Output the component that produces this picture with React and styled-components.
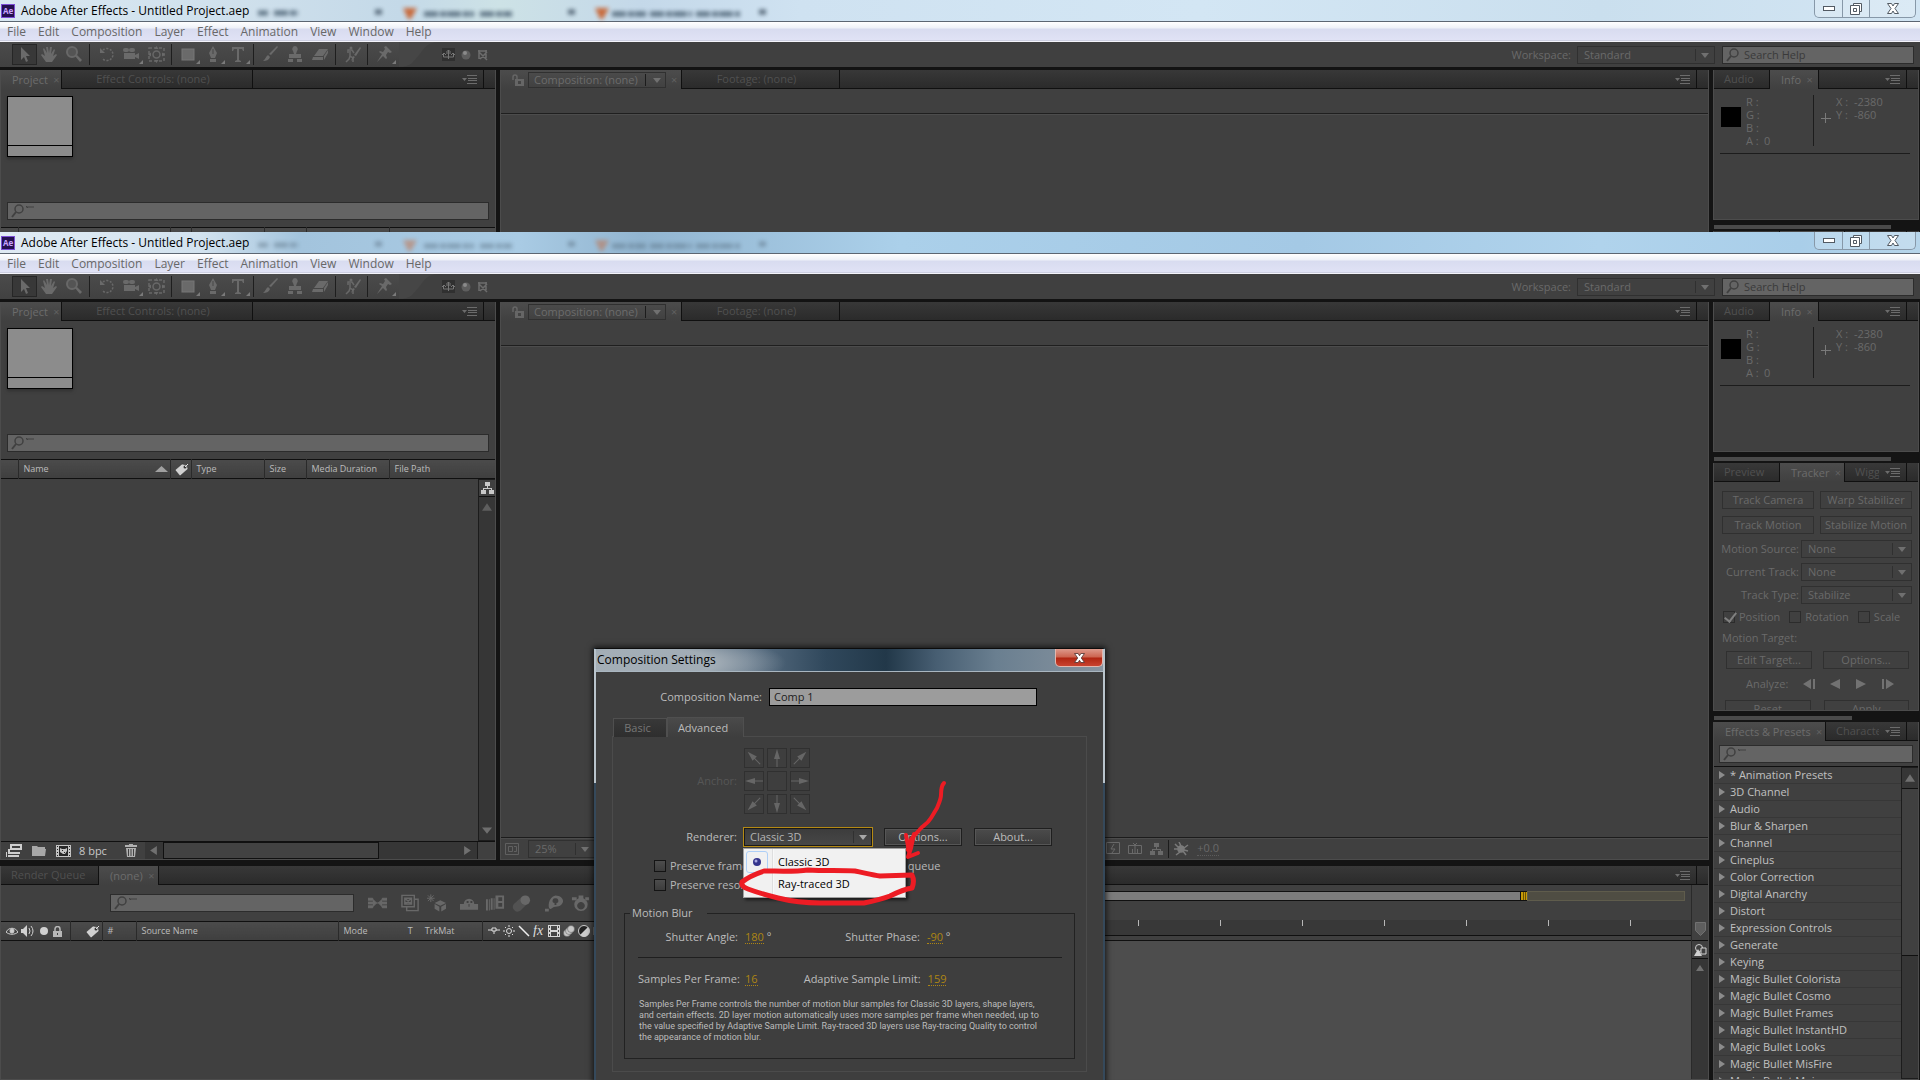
import React, { useId } from 'react';
import styled, { createGlobalStyle, css } from 'styled-components';

const GlobalStyle = createGlobalStyle`
  * {
    box-sizing: border-box;
  }
  body {
    margin: 0;
    background: #141414;
    font-family: 'Open Sans', 'Noto Sans', sans-serif;
    font-size: 11px;
    line-height: 14px;
    color: #bcbcbc;
  }
  button,
  input,
  select {
    font: inherit;
    color: inherit;
    margin: 0;
    padding: 0;
    border: 0;
    background: none;
    border-radius: 0;
  }
  svg {
    display: block;
    flex: none;
  }
`;

const menus = ['File', 'Edit', 'Composition', 'Layer', 'Effect', 'Animation', 'View', 'Window', 'Help'];

const effects = [
  '* Animation Presets',
  '3D Channel',
  'Audio',
  'Blur & Sharpen',
  'Channel',
  'Cineplus',
  'Color Correction',
  'Digital Anarchy',
  'Distort',
  'Expression Controls',
  'Generate',
  'Keying',
  'Magic Bullet Colorista',
  'Magic Bullet Cosmo',
  'Magic Bullet Frames',
  'Magic Bullet InstantHD',
  'Magic Bullet Looks',
  'Magic Bullet MisFire',
  'Magic Bullet Mojo',
];

/* ---------- icons ---------- */

const toolIcons = {
  select: <path d="M5 1v13l3-3 2 5 2-1-2-5h4z" />,
  hand: <path d="M5 16 0 9l1-1 3 2L2 3l1-1 3 5-1-6h2l1 6 1-6h2l-1 7 3-5 1 1-2 6 3-2 1 1-5 7z" />,
  zoom: (
    <>
      <circle cx="6" cy="6" r="5" fill="#545454" stroke="#686868" strokeWidth="2" />
      <path d="m9 10 2-1 5 5-2 2z" />
    </>
  ),
  rotate: (
    <>
      <path d="M5 4a6 6 0 1 1-1 8" fill="none" stroke="#686868" strokeWidth="1.5" strokeDasharray="2 1.5" />
      <path d="M2 2v5h5z" />
    </>
  ),
  camera: (
    <>
      <rect x="0" y="2" width="6" height="4" rx="2" />
      <rect x="6" y="2" width="6" height="4" rx="2" />
      <rect x="1" y="7" width="11" height="6" />
      <path d="m12 9 4-2v6l-4-2z" />
    </>
  ),
  orbit: (
    <>
      <rect x="1" y="2" width="15" height="13" fill="none" stroke="#686868" strokeDasharray="3 2" strokeWidth="1.5" />
      <circle cx="8.5" cy="8.5" r="3.5" fill="none" stroke="#686868" strokeWidth="1.5" />
      <path d="m8.500 0 2 3h-4zM8.500 17l2-3h-4zM0 8.500l3-2v4zM17 8.500l-3-2v4z" />
    </>
  ),
  rect: <rect x="2" y="3" width="12" height="11" stroke="#777" />,
  pen: <path d="M8 0 4 7l2 5h4l2-5zM7.500 3h1v5h-1zM5 13h6v3H5z" fillRule="evenodd" />,
  type: <path d="M2 1h12v4h-1l-1-2H9v11l2 1v1H5v-1l2-1V3H4L3 5H2z" />,
  brush: <path d="M15 0 16 1 9 9 7 8zM6 9l2 2c-1 3-4 4-7 4 2-1 3-5 5-6z" />,
  stamp: <path d="M8 0a3 3 0 0 1 2 5l-1 3h5v4H2V8h5L6 5a3 3 0 0 1 2-5zM1 13h5v3H1zM10 13h5v3h-5z" />,
  eraser: <path d="M7 3h9l-5 7H2zM1 11h10v3H0zM12 10l4-6v3l-4 7z" />,
  roto: (
    <>
      <path d="M4 7V4h4l2 3M6 5v5l3 2v4M6 10l-1 3-3 3" fill="none" stroke="#686868" strokeWidth="1.500" />
      <circle cx="7" cy="2" r="1.500" />
      <path d="m16 1 1 1-5 8-2-1zM9 10l2 1-4 4z" />
    </>
  ),
  pin: <path d="m10 0 6 6-2 1-2-1-2 3 1 3-1 1-3-3-6 6 5-8-3-2 1-1 3 1 2-3-1-2z" />,
};

const ToolIcon = ({ name }) => (
  <svg width="17" height="17" viewBox="0 0 17 17" fill="#6a6a6a">
    {toolIcons[name]}
  </svg>
);

const Triangle = ({ dir = 'down', size = 8, color = '#707070' }) => {
  const paths = {
    down: 'M0 2h8L4 7z',
    up: 'M0 7h8L4 1z',
    left: 'M7 0v8L1 4z',
    right: 'M1 0v8l6-4z',
  };
  return (
    <svg width={size} height={size} viewBox="0 0 8 8" fill={color}>
      <path d={paths[dir]} />
    </svg>
  );
};

const MagnifierIcon = ({ mark }) => (
  <svg width="26" height="14" viewBox="0 0 26 14" fill="none" stroke="#404040">
    <circle cx="8" cy="5" r="4" strokeWidth="1.500" />
    <path d="m5 8-4 5" strokeWidth="2" />
    {mark && <path d="M15 3h8M17 4l-2-2" />}
  </svg>
);

const MenuLinesIcon = () => (
  <svg width="15" height="9" viewBox="0 0 15 9" fill="#6c6c6c">
    <path d="M0 3h5L2.500 6zM5 0h10v1H5zM6 3h9v1H6zM6 5h9v1H6zM5 8h10v1H5z" />
  </svg>
);

const LockIcon = () => (
  <svg width="12" height="12" viewBox="0 0 12 12">
    <path d="M1 6V3a2 2 0 0 1 4 0v2" fill="none" stroke="#666" strokeWidth="1.500" />
    <path d="M3 5h9v7H3zM6 7v3h3V7z" fill="#666" fillRule="evenodd" />
  </svg>
);

const TagIcon = () => (
  <svg width="15" height="13" viewBox="0 0 15 13">
    <path d="M1 7 8 1l5 1 1 4-8 7z" fill="#d0d0d0" stroke="#222" strokeWidth=".5" />
    <circle cx="11" cy="4" r="1.500" fill="#333" />
    <path d="m11 4 3-3" stroke="#ddd" />
  </svg>
);

const FlowchartIcon = ({ color = '#c8c8c8' }) => (
  <svg width="13" height="12" viewBox="0 0 13 12" fill={color}>
    <path d="M4 0h5v4H7v2h4v2h2v4H8V8h2V7H3v1h2v4H0V8h2V6h4V4H4z" />
  </svg>
);

const CompIcon = () => (
  <svg width="15" height="12" viewBox="0 0 15 12">
    <rect width="15" height="12" fill="#c4c4c4" />
    <path d="M3 1h9v10H3zM1 1h1v1H1zM1 4h1v1H1zM1 7h1v1H1zM1 10h1v1H1zM13 1h1v1h-1zM13 4h1v1h-1zM13 7h1v1h-1zM13 10h1v1h-1z" fill="#262626" />
    <path d="m4 3 2 1h3l2-1v3L9 9H7L4 7z" fill="#c4c4c4" />
    <path d="M6 5h1v1H6zM8 7h1v1H8z" fill="#262626" />
  </svg>
);

const timelineIcons = [
  [<path key="flow" d="M0 4h5v2H0zM0 8h5v2H0zM0 12h5v2H0zM15 4h5v2h-5zM15 8h5v2h-5zM15 12h5v2h-5zM5 5l4 4-4 4M15 5l-4 4 4 4M8 9h4" stroke="#686868" />],
  [
    <path key="draft" d="M1 1h13v12H1zM4 4h7v6H4zM4 4l7 6M11 4l-7 6M14 5h4v12H6v-4" fill="none" stroke="#686868" strokeWidth="1.500" />,
    <g key="cube">
      <path d="M0 4h8M4 0v8M1 1l6 6M7 1 1 7" stroke="#686868" />
      <path d="M8 9l6-3 6 3-6 3zM8 10l5 3v5l-5-3zM20 10l-5 3v5l5-3z" />
    </g>,
  ],
  [
    <path key="shy" d="M0 10h4a5 5 0 1 1 11 0h4v6H0zM7 7h2v2H7zM11 7h2v2h-2zM9 10h1v3H9z" fillRule="evenodd" />,
    <path key="blend" d="M0 5h2v12H0zM3 5h1v12H3zM5 4h2v12H5zM8 4h1v12H8zM10 1h9v14h-9zM13 3v4h4V3zM13 9v4h4V9z" fillRule="evenodd" />,
    <g key="blur">
      <path d="M2 10 11 2l7 6-9 9a5 5 0 0 1-7-7z" fill="#525252" />
      <circle cx="14" cy="6" r="5" />
    </g>,
  ],
  [
    <path key="brain" d="M11 1c5 0 8 3 8 6s-3 6-8 6c-3 0-4 3-6 2S3 3 11 1zM11 4a2.500 2.500 0 0 0-1 5v2h2V9a2.500 2.500 0 0 0-1-5zM0 15h4v3H0z" fillRule="evenodd" />,
    <path key="auto" d="M8 1h5v3a7 7 0 1 1-5 0zM10 8a4 4 0 1 0 1 0zM1 3h5v3H1zM15 3h4v3h-4z" fillRule="evenodd" />,
  ],
];

const switchIcons = [
  <path key="shy" d="M0 5h4M8 5h4M4 3h4v3H4zM6 6v3" fill="none" stroke="#ddd" />,
  <g key="sun" fill="none" stroke="#ddd">
    <circle cx="6" cy="6" r="2.500" />
    <path d="M6 0v2M6 10v2M0 6h2M10 6h2M2 2l1 1M9 9l1 1M10 2 9 3M3 9l-1 1" />
  </g>,
  <path key="quality" d="m1 1 10 10" stroke="#eee" strokeWidth="1.500" />,
  <text key="fx" x="0" y="10" fontFamily="Liberation Serif, serif" fontStyle="italic" fontSize="14" fill="#ddd">fx</text>,
  <path key="film" d="M0 0h12v12H0zM3 1v4h6V1zM3 7v4h6V7zM1 1v2h1V1zM1 5v2h1V5zM1 9v2h1V9zM10 1v2h1V1zM10 5v2h1V5zM10 9v2h1V9z" fillRule="evenodd" fill="#d6d6d6" />,
  <g key="blur" fill="#c8c8c8" stroke="#555" strokeWidth=".5">
    <circle cx="4" cy="8" r="3.500" />
    <circle cx="6" cy="6" r="3.500" />
    <circle cx="8" cy="4" r="3.500" />
  </g>,
  <g key="adjust">
    <circle cx="6" cy="6" r="5.500" fill="#222" stroke="#ccc" />
    <path d="M10 2A5.500 5.500 0 0 1 2 10z" fill="#ccc" />
  </g>,
  <path key="cube" d="M1 2h8v8H1z" fill="none" stroke="#aaa" />,
];

/* ---------- window chrome ---------- */

const Desktop = styled.main`
  min-height: 100vh;
  overflow: hidden;
`;

const Shot = styled.section`
  position: relative;
  height: ${(p) => (p.$cropped ? '232px' : 'calc(100vh - 232px)')};
  overflow: hidden;
`;

const WindowFrame = styled.div`
  display: flex;
  flex-direction: column;
  height: calc(100vh - 232px);
  background: #141414;
`;

const TitleBar = styled.header`
  position: relative;
  display: flex;
  align-items: center;
  height: 22px;
  padding-left: 1px;
  border-bottom: 1px solid #5c6672;
  color: #000;
  background: ${(p) =>
    p.$deep
      ? 'linear-gradient(90deg, #dfeaf3 0, #d3e3ef 200px, #a3c4dd 300px, #a9cbe4 520px, #92b5d0 640px, #abd0ea 900px, #a4c9e5 1300px, #b0d3ec 1600px, #a9cee9 1800px, #b6d5ea 100%)'
      : 'linear-gradient(90deg, #d9e8f2 0, #cfe0ec 240px, #c4d9e8 400px, #cde2e6 500px, #c4d8e9 640px, #cfe2f1 800px, #d3e6f4 1200px, #cadfee 1600px, #d2e5f3 100%)'};
`;

const AppBadge = styled.span`
  width: 14px;
  height: 14px;
  border: 1px solid #7c4fd6;
  background: #24104f;
  color: #c9a4ff;
  font-size: 8px;
  font-weight: 700;
  line-height: 12px;
  text-align: center;
`;

const Title = styled.h1`
  position: relative;
  margin: 0 0 0 6px;
  font-size: 12px;
  font-weight: 400;
`;

const GhostTabs = styled.svg`
  position: absolute;
  left: 240px;
  top: 0;
  filter: blur(2px);
  opacity: ${(p) => (p.$deep ? 0.45 : 0.9)};
`;

const Caption = styled.div`
  display: flex;
  align-self: flex-start;
  height: 18px;
  margin: 0 4px 0 auto;
  border: 1px solid #8798a8;
  border-top: 0;
  border-radius: 0 0 5px 5px;
  background: rgba(255, 255, 255, 0.2);
`;

const CaptionButton = styled.button`
  display: flex;
  align-items: center;
  justify-content: center;
  width: ${(p) => (p.$wide ? '46px' : '27px')};
  & + & {
    border-left: 1px solid #8798a8;
  }
`;

const MenuBar = styled.nav`
  display: flex;
  align-items: center;
  gap: 12px;
  height: 20px;
  padding-left: 7px;
  border-bottom: 1px solid #f4f4fb;
  background: linear-gradient(#ffffff 0, #eef1f8 6px, #d8dcf0 7px, #e0e2f5 18px, #b9bccd 19px);
`;

const MenuItem = styled.button`
  font-size: 12px;
  color: #686868;
`;

const Toolbar = styled.div`
  display: flex;
  align-items: center;
  height: 28px;
  padding-right: 6px;
  border-bottom: 3px solid #131313;
  background: #404040;
`;

const ToolStrip = styled.div`
  display: flex;
  align-items: center;
  height: 25px;
  padding-left: 5px;
  background: linear-gradient(#4b4b4b, #414141);
`;

const Grip = styled.span`
  flex: none;
  width: 5px;
  height: ${(p) => (p.$tall ? '18px' : '10px')};
  background-image: radial-gradient(#5c5c5c 40%, transparent 50%);
  background-size: 2px 2px;
`;

const ToolGroup = styled.div`
  display: flex;
  padding: 0 2px;
  & + & {
    border-left: 1px solid #1e1e1e;
    padding-left: 4px;
  }
`;

const ToolButton = styled.button`
  position: relative;
  display: flex;
  align-items: center;
  justify-content: center;
  width: 25px;
  height: 21px;
  ${(p) =>
    p.$active &&
    css`
      background: #383838;
      border: 1px solid #262626;
    `}
  ${(p) =>
    p.$more &&
    css`
      &::after {
        content: '';
        position: absolute;
        right: 1px;
        bottom: 1px;
        border: 2px solid transparent;
        border-right-color: #7a7a7a;
        border-bottom-color: #7a7a7a;
      }
    `}
`;

const AxisGroup = styled.div`
  display: flex;
  align-items: center;
  gap: 6px;
`;

const DimLabel = styled.label`
  color: #6a6a6a;
  white-space: nowrap;
`;

/* ---------- shared controls ---------- */

const SelectBox = styled.span`
  position: relative;
  display: flex;
  align-items: center;
  width: ${(p) => p.$width};
  height: 18px;
  flex: none;
  border: 1px solid ${(p) => (p.$focus ? '#b58a14' : '#303030')};
  color: ${(p) => (p.$focus ? '#b4b4b4' : '#6a6a6a')};
  background: ${(p) => (p.$focus ? 'linear-gradient(#3c3c3c, #474747)' : 'transparent')};
  ${(p) =>
    p.$focus &&
    css`
      height: 20px;
      box-shadow: inset 0 0 0 1px #191919;
    `}
  select {
    flex: 1;
    min-width: 0;
    height: 100%;
    padding-left: 6px;
    appearance: none;
  }
  svg {
    margin: 0 5px;
    pointer-events: none;
  }
`;

const SelectDivider = styled.span`
  width: 1px;
  height: 12px;
  background: #303030;
`;

function Select({ width, value, focus, ...rest }) {
  return (
    <SelectBox $width={width} $focus={focus}>
      <select defaultValue={value} {...rest}>
        <option>{value}</option>
      </select>
      <SelectDivider />
      <Triangle color={focus ? '#a8a8a8' : '#707070'} />
    </SelectBox>
  );
}

const SearchBox = styled.label`
  display: flex;
  align-items: center;
  flex: none;
  width: ${(p) => p.$width || 'auto'};
  height: 18px;
  margin: ${(p) => p.$margin || 0};
  padding-left: 3px;
  border: 1px solid #2c2c2c;
  background: #646464;
  overflow: hidden;
  input {
    flex: 1;
    min-width: 0;
    margin-left: -8px;
    outline: 0;
  }
  input::placeholder {
    color: #3a3a3a;
    opacity: 1;
  }
`;

function Search({ width, margin, placeholder = '', mark, label }) {
  return (
    <SearchBox $width={width} $margin={margin}>
      <MagnifierIcon mark={mark} />
      <input aria-label={label} placeholder={placeholder} />
    </SearchBox>
  );
}

const PushButton = styled.button`
  flex: ${(p) => (p.$width ? 'none' : '1')};
  width: ${(p) => p.$width || 'auto'};
  height: 18px;
  line-height: 14px;
  white-space: nowrap;
  ${(p) =>
    p.$bright
      ? css`
          border: 1px solid #1f1f1f;
          background: linear-gradient(#4b4b4b, #3b3b3b);
          box-shadow: inset 0 0 0 1px #565656;
        `
      : css`
          border: 1px solid #303030;
          color: #6a6a6a;
        `}
`;

const CheckLabel = styled.label`
  display: flex;
  align-items: center;
  gap: 4px;
  white-space: nowrap;
  color: ${(p) => (p.$bright ? '#b8b8b8' : '#6a6a6a')};
  input {
    position: relative;
    width: 12px;
    height: 12px;
    appearance: none;
    border: 1px solid ${(p) => (p.$bright ? '#141414' : '#2c2c2c')};
    background: ${(p) => (p.$bright ? 'linear-gradient(#4d4d4d, #3c3c3c)' : 'transparent')};
  }
  input:checked::after {
    content: '';
    position: absolute;
    left: 3px;
    top: -2px;
    width: 5px;
    height: 10px;
    border: solid #808080;
    border-width: 0 2px 2px 0;
    transform: rotate(38deg);
  }
`;

/* ---------- panels ---------- */

const Workspace = styled.div`
  display: flex;
  flex: 1;
  min-height: 0;
  gap: 4px;
  padding-right: 1px;
`;

const MainArea = styled.div`
  display: flex;
  flex-direction: column;
  flex: 1;
  min-width: 0;
  gap: 6px;
`;

const TopRow = styled.div`
  display: flex;
  flex: 1;
  min-height: 0;
  gap: 4px;
`;

const SideArea = styled.aside`
  display: flex;
  flex-direction: column;
  flex: none;
  width: 206px;
`;

const Panel = styled.section`
  display: flex;
  flex-direction: column;
  flex: ${(p) => p.$flex || 'none'};
  width: ${(p) => p.$width || 'auto'};
  height: ${(p) => p.$height || 'auto'};
  min-width: 0;
  min-height: 0;
  overflow: hidden;
  background: #404040;
  border: 1px solid #4c4c4c;
  border-top: 0;
`;

const TabBar = styled.div`
  display: flex;
  flex: none;
  height: 19px;
  background: linear-gradient(#383838, #2a2a2a);
`;

const TabList = styled.div`
  display: flex;
  flex: 1;
  min-width: 0;
  overflow: hidden;
`;

const TabFiller = styled.div`
  flex: 1;
  border-bottom: 1px solid #101010;
`;

const Tab = styled.div`
  display: flex;
  align-items: center;
  flex: none;
  gap: 4px;
  width: ${(p) => p.$width};
  padding-left: ${(p) => (p.$active ? '2px' : '10px')};
  white-space: nowrap;
  border-right: 1px solid #101010;
  ${(p) =>
    p.$active
      ? css`
          color: #6c6c6c;
          background: linear-gradient(#4c4c4c, #404040);
        `
      : css`
          color: #505050;
          border-bottom: 1px solid #101010;
        `}
  ${(p) =>
    p.$center &&
    css`
      justify-content: center;
      padding: 0 8px 0 0;
    `}
`;

const TabButton = styled.button`
  text-align: left;
`;

const CloseTab = styled.button`
  width: 9px;
  color: #606060;
  line-height: 10px;
`;

const PanelMenu = styled.button`
  display: flex;
  flex: none;
  justify-content: center;
  width: 27px;
  padding-top: 5px;
  border-bottom: 1px solid #101010;
`;

const EndGrip = styled.div`
  flex: none;
  width: 12px;
  padding: 4px 0 0 3px;
  border-left: 1px solid #101010;
  border-bottom: 1px solid #101010;
`;

function PanelTabs({ children }) {
  return (
    <TabBar>
      <TabList>
        {children}
        <TabFiller />
      </TabList>
      <PanelMenu aria-label="Panel menu">
        <MenuLinesIcon />
      </PanelMenu>
      <EndGrip>
        <Grip as="div" />
      </EndGrip>
    </TabBar>
  );
}

function ActiveTab({ label, width }) {
  return (
    <Tab $active $width={width}>
      <Grip />
      <TabButton>{label}</TabButton>
      <CloseTab aria-label={`Close ${label}`}>×</CloseTab>
    </Tab>
  );
}

const Thumb = styled.div`
  width: 66px;
  height: 61px;
  margin: 7px 0 45px 6px;
  border: 1px solid #000;
  background: linear-gradient(#8c8c8c 48px, #000 48px, #000 49px, #8c8c8c 49px);
  box-shadow: 0 2px 3px #303030;
`;

const HeadTable = styled.table`
  width: 100%;
  flex: none;
  table-layout: fixed;
  border-collapse: collapse;
  border-top: 1px solid #101010;
  border-bottom: 1px solid #101010;
  background: linear-gradient(#4b4b4b, #3f3f3f);
  th {
    height: 19px;
    padding: 0 0 0 5px;
    font-size: 9px;
    line-height: 12px;
    font-weight: 400;
    text-align: left;
    white-space: nowrap;
    border-right: 1px solid #2a2a2a;
  }
  th:last-child {
    border-right: 0;
  }
`;

const HeadCell = styled.th`
  width: ${(p) => p.$width};
`;

const HeadFlex = styled.div`
  display: flex;
  align-items: center;
  justify-content: ${(p) => p.$justify || 'flex-start'};
  gap: ${(p) => p.$gap || '0'};
  padding-right: 2px;
`;

const Row = styled.div`
  display: flex;
  flex: ${(p) => (p.$grow ? '1' : 'none')};
  min-height: 0;
  gap: ${(p) => p.$gap || '0'};
  height: ${(p) => p.$height || 'auto'};
  padding: ${(p) => p.$pad || '0'};
  align-items: ${(p) => (p.$grow ? 'stretch' : 'center')};
`;

const Fill = styled.div`
  flex: 1;
`;

const ScrollRail = styled.div`
  display: flex;
  flex-direction: column;
  align-items: center;
  justify-content: space-between;
  flex: none;
  width: 17px;
  border: 1px solid #1c1c1c;
  border-right: 0;
  background: #363636;
`;

const RailCap = styled.div`
  display: flex;
  align-items: center;
  justify-content: center;
  width: 100%;
  height: ${(p) => p.$height || '17px'};
  border-bottom: 1px solid #101010;
  background: #404040;
`;

const RailArrow = styled.button`
  display: flex;
  justify-content: center;
  width: 100%;
  padding: 5px 0;
`;

const RailThumb = styled.div`
  width: 100%;
  height: 168px;
  margin-bottom: auto;
  border-top: 1px solid #101010;
  border-bottom: 1px solid #101010;
  background: #404040;
`;

const BottomScroll = styled.div`
  display: flex;
  align-items: center;
  flex: 1;
  height: 17px;
  padding: 0 5px 0 4px;
  margin: 0 17px 0 8px;
  border-right: 1px solid #1c1c1c;
  background: #363636;
`;

const BottomThumb = styled.div`
  width: 67%;
  height: 17px;
  margin: 0 auto 0 5px;
  border: 1px solid #101010;
  background: #424242;
`;

const ProjectFooter = styled.footer`
  display: flex;
  align-items: center;
  flex: none;
  height: 18px;
  padding-left: 5px;
  border-top: 1px solid #101010;
  color: #c8c8c8;
`;

const BitDepth = styled.button`
  margin: 0 18px 0 8px;
`;

function ProjectPanel() {
  return (
    <Panel $width="496px">
      <PanelTabs>
        <ActiveTab label="Project" width="61px" />
        <Tab $width="191px" $center>
          <TabButton>Effect Controls: (none)</TabButton>
        </Tab>
      </PanelTabs>
      <Thumb />
      <Search margin="0 6px 7px 6px" mark label="Search project" />
      <HeadTable>
        <thead>
          <tr>
            <HeadCell $width="17px" aria-label="Expand" />
            <HeadCell $width="152px">
              <HeadFlex $justify="space-between">
                Name
                <svg width="13" height="6" viewBox="0 0 13 6">
                  <path d="M0 6h13L6.500 0z" fill="#a0a0a0" />
                </svg>
              </HeadFlex>
            </HeadCell>
            <HeadCell $width="21px" aria-label="Label">
              <HeadFlex $justify="flex-end">
                <TagIcon />
              </HeadFlex>
            </HeadCell>
            <HeadCell $width="73px">Type</HeadCell>
            <HeadCell $width="42px">Size</HeadCell>
            <HeadCell $width="83px">Media Duration</HeadCell>
            <HeadCell>File Path</HeadCell>
          </tr>
        </thead>
      </HeadTable>
      <Row $grow>
        <Fill />
        <ScrollRail>
          <RailCap>
            <FlowchartIcon />
          </RailCap>
          <RailArrow aria-label="Scroll up">
            <Triangle dir="up" size={10} color="#5e5e5e" />
          </RailArrow>
          <Fill />
          <RailArrow aria-label="Scroll down">
            <Triangle size={10} color="#6e6e6e" />
          </RailArrow>
        </ScrollRail>
      </Row>
      <ProjectFooter>
        <Row $gap="10px">
          <svg width="16" height="13" viewBox="0 0 16 13" fill="#cfcfcf">
            <path d="M4 0h12v6H4zM6 2v2h8V2zM2 5h2v3h10v2H2zM0 8h1v5H0zM2 11h11v2H2z" fillRule="evenodd" />
          </svg>
          <svg width="14" height="11" viewBox="0 0 14 11" fill="#a8a8a8">
            <path d="M0 1h5l1 1h7v2h1l-1 7H0z" />
          </svg>
          <CompIcon />
        </Row>
        <BitDepth>8 bpc</BitDepth>
        <svg width="12" height="13" viewBox="0 0 12 13" fill="#b0b0b0">
          <path d="M4 0h4v1h4v2H0V1h4zM1 4h10l-1 9H2zM3 5v7h1V5zM5.500 5v7h1V5zM8 5v7h1V5z" fillRule="evenodd" />
        </svg>
        <BottomScroll>
          <Triangle dir="left" size={9} />
          <BottomThumb />
          <Triangle dir="right" size={9} />
        </BottomScroll>
      </ProjectFooter>
    </Panel>
  );
}

const CompPicker = styled.span`
  display: flex;
  align-items: center;
  gap: 7px;
  height: 16px;
  padding: 0 4px 0 5px;
  border: 1px solid #303030;
`;

const ViewerBar = styled.div`
  flex: none;
  height: 25px;
  border-bottom: 1px solid #1f1f1f;
  box-shadow: 0 1px 0 #4c4c4c;
`;

const ViewerFooter = styled.footer`
  display: flex;
  align-items: center;
  gap: 9px;
  flex: none;
  height: 22px;
  padding-left: 4px;
  border-top: 1px solid #1c1c1c;
  box-shadow: inset 0 1px 0 #4c4c4c;
  color: #6a6a6a;
`;

const ViewerRight = styled.div`
  display: flex;
  align-items: center;
  gap: 8px;
  margin: 0 489px 0 auto;
`;

const VSep = styled.span`
  width: 1px;
  height: ${(p) => p.$height || '18px'};
  margin: ${(p) => p.$margin || 0};
  background: #1c1c1c;
`;

const Exposure = styled.button`
  border-bottom: 1px dotted #5c5c5c;
`;

function CompositionPanel() {
  return (
    <Panel $flex="1">
      <PanelTabs>
        <Tab $active $width="181px">
          <Grip />
          <LockIcon />
          <CompPicker>
            <TabButton>Composition: (none)</TabButton>
            <VSep $height="12px" />
            <Triangle />
          </CompPicker>
          <CloseTab aria-label="Close composition">×</CloseTab>
        </Tab>
        <Tab $width="158px" $center>
          <TabButton>Footage: (none)</TabButton>
        </Tab>
      </PanelTabs>
      <ViewerBar />
      <Fill />
      <ViewerFooter>
        <svg width="14" height="12" viewBox="0 0 14 12" fill="none" stroke="#606060">
          <path d="M.500.500h13v11H.500zM3.500 3.500h4v5h-4zM9 3.500h2.500v5H9" />
        </svg>
        <Select width="67px" value="25%" aria-label="Magnification" />
        <ViewerRight>
          <svg width="14" height="13" viewBox="0 0 14 13" fill="none" stroke="#6a6a6a">
            <path d="M.500.500h13v11H.500zM8 2 5 7h4l-3 4" />
          </svg>
          <svg width="14" height="13" viewBox="0 0 14 13" fill="none" stroke="#6a6a6a">
            <path d="M.500 3.500h13v8H.500zM4.500 7v5M9.500 7v5M5 1l2 2 2-2M7 3v9" />
          </svg>
          <FlowchartIcon color="#6a6a6a" />
          <VSep $margin="0 -3px" />
          <svg width="15" height="14" viewBox="0 0 15 14" fill="none" stroke="#7a7a7a" strokeWidth="1.500">
            <circle cx="7" cy="7" r="3" fill="#7a7a7a" />
            <path d="M7 4 5 0M10 6l4-3M9 9l3 4M6 10l-4 3M4 7H0M4 5 1 2M10 8l4 1" />
          </svg>
          <Exposure>+0.0</Exposure>
        </ViewerRight>
      </ViewerFooter>
    </Panel>
  );
}

const InfoBody = styled.div`
  display: flex;
  height: 65px;
  margin: 0 8px 0 6px;
  padding-top: 6px;
  border-bottom: 1px solid #1c1c1c;
  color: #6a6a6a;
  line-height: 13px;
`;

const Swatch = styled.div`
  width: 20px;
  height: 20px;
  margin: 12px 5px 0 1px;
  background: #000;
`;

const Readout = styled.dl`
  display: grid;
  grid-template-columns: 14px auto;
  grid-auto-rows: 13px;
  align-content: start;
  width: ${(p) => p.$width || 'auto'};
  margin: 0;
  dd {
    margin: 0 0 0 4px;
  }
  dt {
    white-space: nowrap;
  }
`;

const Cross = styled.div`
  height: 51px;
  padding: 18px 5px 0 7px;
  border-left: 1px solid #1c1c1c;
`;

function InfoPanel() {
  return (
    <Panel $height="150px">
      <PanelTabs>
        <Tab $width="56px">
          <TabButton>Audio</TabButton>
        </Tab>
        <ActiveTab label="Info" width="49px" />
      </PanelTabs>
      <InfoBody>
        <Swatch />
        <Readout $width="67px">
          <dt>R :</dt>
          <dd />
          <dt>G :</dt>
          <dd />
          <dt>B :</dt>
          <dd />
          <dt>A :</dt>
          <dd>0</dd>
        </Readout>
        <Cross>
          <svg width="10" height="10" viewBox="0 0 10 10" stroke="#7a7a7a">
            <path d="M0 5.500h10M4.500 0v10" />
          </svg>
        </Cross>
        <Readout>
          <dt>X :</dt>
          <dd>-2380</dd>
          <dt>Y :</dt>
          <dd>-860</dd>
        </Readout>
      </InfoBody>
    </Panel>
  );
}

const HStrip = styled.div`
  flex: none;
  width: ${(p) => p.$width};
  height: 4px;
  margin: 5px 0 2px 1px;
  background: #4a4a4a;
`;

const TrackerBody = styled.div`
  display: flex;
  flex-direction: column;
  flex: none;
  padding: 9px 6px 0 8px;
`;

const ButtonPair = styled.div`
  display: flex;
  gap: ${(p) => p.$gap || '6px'};
  margin: ${(p) => p.$margin || '0 0 7px'};
`;

const TrackField = styled.div`
  display: flex;
  align-items: center;
  justify-content: flex-end;
  gap: 2px;
  height: 18px;
  margin-bottom: 5px;
`;

const AnalyzeRow = styled.div`
  display: flex;
  align-items: center;
  gap: 15px;
  height: 14px;
  margin: 8px 0 9px 24px;
  color: #6a6a6a;
`;

function TrackSelect({ label, value }) {
  const id = useId();
  return (
    <TrackField>
      <DimLabel htmlFor={id}>{label}</DimLabel>
      <Select id={id} width="111px" value={value} />
    </TrackField>
  );
}

function TrackerPanel() {
  return (
    <Panel $height="248px">
      <PanelTabs>
        <Tab $width="66px">
          <TabButton>Preview</TabButton>
        </Tab>
        <ActiveTab label="Tracker" width="65px" />
        <Tab $width="90px">
          <TabButton>Wiggler</TabButton>
        </Tab>
      </PanelTabs>
      <TrackerBody>
        <ButtonPair>
          <PushButton>Track Camera</PushButton>
          <PushButton>Warp Stabilizer</PushButton>
        </ButtonPair>
        <ButtonPair $margin="0 0 6px">
          <PushButton>Track Motion</PushButton>
          <PushButton>Stabilize Motion</PushButton>
        </ButtonPair>
        <TrackSelect label="Motion Source:" value="None" />
        <TrackSelect label="Current Track:" value="None" />
        <TrackSelect label="Track Type:" value="Stabilize" />
        <Row $height="16px" $gap="9px" $pad="0 0 0 1px">
          <CheckLabel>
            <input type="checkbox" defaultChecked />
            Position
          </CheckLabel>
          <CheckLabel>
            <input type="checkbox" />
            Rotation
          </CheckLabel>
          <CheckLabel>
            <input type="checkbox" />
            Scale
          </CheckLabel>
        </Row>
        <Row $height="26px">
          <DimLabel as="span">Motion Target:</DimLabel>
        </Row>
        <ButtonPair $gap="11px" $margin="0 3px 0 4px">
          <PushButton>Edit Target...</PushButton>
          <PushButton>Options...</PushButton>
        </ButtonPair>
        <AnalyzeRow>
          Analyze:
          <svg width="12" height="10" viewBox="0 0 12 10" fill="#727272">
            <path d="M0 5l8-5v10zM10 0h2v10h-2z" />
          </svg>
          <svg width="11" height="10" viewBox="0 0 11 10" fill="#727272">
            <path d="M0 5l10-5v10z" />
          </svg>
          <svg width="11" height="10" viewBox="0 0 11 10" fill="#727272">
            <path d="M10 5 0 0v10z" />
          </svg>
          <svg width="12" height="10" viewBox="0 0 12 10" fill="#727272">
            <path d="M12 5 4 0v10zM0 0h2v10H0z" />
          </svg>
        </AnalyzeRow>
        <ButtonPair $gap="13px" $margin="0 3px 0 3px">
          <PushButton>Reset</PushButton>
          <PushButton>Apply</PushButton>
        </ButtonPair>
      </TrackerBody>
    </Panel>
  );
}

const EffectList = styled.ul`
  flex: 1;
  margin: 0;
  padding: 0;
  list-style: none;
`;

const EffectRow = styled.li`
  height: 17px;
  border-bottom: 1px solid #373737;
  button {
    display: flex;
    align-items: center;
    gap: 4px;
    height: 16px;
    padding-left: 4px;
    color: #c0c0c0;
  }
`;

const EffectsBody = styled.div`
  display: flex;
  flex: 1;
  min-height: 0;
  border-top: 1px solid #101010;
`;

function EffectsPanel() {
  return (
    <Panel $flex="1">
      <PanelTabs>
        <ActiveTab label="Effects & Presets" width="112px" />
        <Tab $width="90px">
          <TabButton>Character</TabButton>
        </Tab>
      </PanelTabs>
      <Search margin="4px 5px 3px" mark label="Search effects" />
      <EffectsBody>
        <EffectList>
          {effects.map((name) => (
            <EffectRow key={name}>
              <button>
                <Triangle dir="right" color="#8c8c8c" />
                {name}
              </button>
            </EffectRow>
          ))}
        </EffectList>
        <ScrollRail>
          <RailArrow aria-label="Scroll up">
            <Triangle dir="up" size={10} />
          </RailArrow>
          <RailThumb />
        </ScrollRail>
      </EffectsBody>
    </Panel>
  );
}

/* ---------- timeline ---------- */

const TimelineBody = styled.div`
  display: flex;
  flex: 1;
  min-height: 0;
`;

const LayerColumn = styled.div`
  flex: none;
  width: 640px;
`;

const LayerTools = styled.div`
  display: flex;
  align-items: center;
  gap: 14px;
  height: 36px;
  padding-left: 109px;
`;

const TimeColumn = styled.div`
  display: flex;
  flex-direction: column;
  flex: 1;
  min-width: 0;
`;

const WorkArea = styled.div`
  display: flex;
  flex: none;
  height: 10px;
  margin: 6px 6px 19px 0;
`;

const WorkBar = styled.div`
  flex: 1;
  background: #7c7c7c;
  border-top: 1px solid #101010;
  border-bottom: 1px solid #101010;
`;

const WorkEnd = styled.div`
  width: 7px;
  border: 1px solid #101010;
  border-width: 1px 0 1px 1px;
  background: linear-gradient(90deg, #c79a08 2px, #6b5200 2px, #6b5200 3px, #c79a08 3px, #c79a08 4px, #6b5200 4px, #6b5200 5px, #c79a08 5px);
`;

const WorkRest = styled.div`
  width: 158px;
  border: 1px solid #5f5c4c;
  background: #4f4d43;
`;

const Ruler = styled.div`
  display: flex;
  justify-content: flex-end;
  flex: none;
  gap: 81px;
  height: 20px;
  padding-right: 60px;
  border-bottom: 4px solid #404040;
  box-shadow: inset 0 -1px 0 #101010;
  background: #383838;
`;

const Tick = styled.span`
  flex: none;
  width: 1px;
  height: 6px;
  background: #b8b8b8;
`;

const LayerStage = styled.div`
  flex: 1;
  border-top: 1px solid #101010;
  background: #4d4d4d;
`;

const TimeRail = styled.div`
  display: flex;
  flex-direction: column;
  align-items: center;
  flex: none;
  width: 17px;
  border-left: 1px solid #2a2a2a;
`;

const RailStage = styled.div`
  flex: 1;
  width: 100%;
  background: #363636;
`;

const MarkerBin = styled.div`
  display: flex;
  justify-content: center;
  align-items: flex-end;
  width: 100%;
  height: 56px;
  padding-bottom: 4px;
  border-bottom: 1px solid #101010;
`;

function TimelinePanel() {
  return (
    <Panel $height="214px">
      <PanelTabs>
        <Tab $width="98px">
          <TabButton>Render Queue</TabButton>
        </Tab>
        <ActiveTab label="(none)" width="60px" />
      </PanelTabs>
      <TimelineBody>
        <LayerColumn>
          <LayerTools>
            <Search width="244px" mark label="Search layers" />
            {timelineIcons.map((group) => (
              <Row key={group[0].key} $gap="7px">
                {group.map((icon) => (
                  <svg key={icon.key} width="19" height="18" viewBox="0 0 20 18" fill="#686868">
                    {icon}
                  </svg>
                ))}
              </Row>
            ))}
          </LayerTools>
          <HeadTable>
            <thead>
              <tr>
                <HeadCell $width="69px" aria-label="Layer features">
                  <HeadFlex $gap="3px">
                    <svg width="12" height="8" viewBox="0 0 12 8" fill="none" stroke="#d0d0d0">
                      <path d="M0 5c3-5 9-5 12 0-3 3-9 3-12 0z" />
                      <circle cx="6" cy="4" r="2" fill="#d0d0d0" />
                    </svg>
                    <svg width="13" height="12" viewBox="0 0 13 12" fill="#d0d0d0">
                      <path d="M0 4h2l4-4v12L2 8H0z" />
                      <path d="M8 3q2 3 0 6M10 1q4 5 0 10" fill="none" stroke="#d0d0d0" />
                    </svg>
                    <svg width="13" height="8" viewBox="0 0 13 8" fill="#d0d0d0">
                      <circle cx="7" cy="4" r="4" />
                    </svg>
                    <svg width="9" height="11" viewBox="0 0 9 11" fill="#b8b8b8">
                      <path d="M0 5h9v6H0zM4 7v2h1V7z" fillRule="evenodd" />
                      <path d="M2 5V3a2 2 0 0 1 5 0v2" fill="none" stroke="#b8b8b8" strokeWidth="1.500" />
                    </svg>
                  </HeadFlex>
                </HeadCell>
                <HeadCell $width="32px" aria-label="Label">
                  <HeadFlex $justify="flex-end">
                    <TagIcon />
                  </HeadFlex>
                </HeadCell>
                <HeadCell $width="34px">#</HeadCell>
                <HeadCell $width="202px">Source Name</HeadCell>
                <HeadCell $width="144px">
                  <HeadFlex $gap="12px">
                    <Fill>Mode</Fill>
                    <span>T</span>
                    <Row $pad="0 25px 0 0">TrkMat</Row>
                  </HeadFlex>
                </HeadCell>
                <HeadCell>
                  <HeadFlex $gap="3px">
                    {switchIcons.map((icon) => (
                      <svg key={icon.key} width="12" height="12" viewBox="0 0 12 12">
                        {icon}
                      </svg>
                    ))}
                  </HeadFlex>
                </HeadCell>
              </tr>
            </thead>
          </HeadTable>
        </LayerColumn>
        <TimeColumn>
          <WorkArea>
            <WorkBar />
            <WorkEnd />
            <WorkRest />
          </WorkArea>
          <Ruler>
            {Array.from({ length: 12 }, (_, i) => (
              <Tick key={i} />
            ))}
          </Ruler>
          <LayerStage />
        </TimeColumn>
        <TimeRail>
          <MarkerBin>
            <svg width="11" height="14" viewBox="0 0 11 14">
              <path d="M.500.500h10v8l-5 5-5-5z" fill="#5e5e5e" stroke="#717171" />
            </svg>
          </MarkerBin>
          <RailCap $height="18px">
            <svg width="13" height="12" viewBox="0 0 13 12" fill="none" stroke="#d0d0d0">
              <circle cx="5" cy="4" r="3.500" />
              <path d="M7 4h5v6H7z" fill="#404040" />
              <path d="m0 12 4-7 4 7z" fill="#d0d0d0" stroke="none" />
            </svg>
          </RailCap>
          <RailStage>
            <RailArrow aria-label="Scroll up">
              <Triangle dir="up" />
            </RailArrow>
          </RailStage>
        </TimeRail>
      </TimelineBody>
    </Panel>
  );
}

/* ---------- main window ---------- */

const toolGroups = [
  [['select', false, true], ['hand'], ['zoom']],
  [['rotate'], ['camera', true], ['orbit']],
  [['rect', true], ['pen', true], ['type', true]],
  [['brush'], ['stamp'], ['eraser']],
  [['roto']],
  [['pin', true]],
];

function AppWindow({ deep }) {
  const workspaceId = useId();
  return (
    <WindowFrame>
      <TitleBar $deep={deep}>
        <AppBadge>Ae</AppBadge>
        <GhostTabs $deep={deep} width="600" height="21" viewBox="0 0 600 21">
          <path d="M18 13h10M34 13h24M184 14h50M240 14h32M372 14h34M410 14h42M456 14h44" stroke="#52687a" strokeWidth="5" strokeDasharray="14 2 6 1" />
          <path d="M135 12h7M328 12h7M519 12h7" stroke="#4a5c6c" strokeWidth="5" />
          <path d="M163 8h14l-6 11h-3zM355 8h14l-6 11h-3z" fill="#c8602c" />
        </GhostTabs>
        <Title>Adobe After Effects - Untitled Project.aep</Title>
        <Caption>
          <CaptionButton aria-label="Minimize">
            <svg width="12" height="5" viewBox="0 0 12 5">
              <rect x=".5" y=".5" width="11" height="4" fill="#fff" stroke="#525a63" />
            </svg>
          </CaptionButton>
          <CaptionButton aria-label="Restore">
            <svg width="12" height="12" viewBox="0 0 12 12" fill="#fff" stroke="#525a63">
              <path d="M3.500.500h8v8h-8z" />
              <path d="M.500 2.500h9v9h-9zM3.500 5.500h3v3h-3z" fillRule="evenodd" />
            </svg>
          </CaptionButton>
          <CaptionButton $wide aria-label="Close">
            <svg width="12" height="11" viewBox="0 0 12 11">
              <path d="M.500.500h4L6 3 7.500.500h4L8 5.500l3.500 5h-4L6 8l-1.500 2.500h-4L4 5.500z" fill="#fff" stroke="#525a63" />
            </svg>
          </CaptionButton>
        </Caption>
      </TitleBar>
      <MenuBar>
        {menus.map((item) => (
          <MenuItem key={item}>{item}</MenuItem>
        ))}
      </MenuBar>
      <Toolbar>
        <ToolStrip>
          <Grip $tall />
          {toolGroups.map((group, i) => (
            <ToolGroup key={i}>
              {group.map(([name, more, active]) => (
                <ToolButton key={name} $more={more} $active={active} aria-label={name}>
                  <ToolIcon name={name} />
                </ToolButton>
              ))}
            </ToolGroup>
          ))}
        </ToolStrip>
        <svg width="43" height="25" viewBox="0 0 43 25">
          <path d="M0 0h43C27 0 26 6 20 13S12 25 0 25z" fill="#464646" />
        </svg>
        <AxisGroup>
          <svg width="13" height="13" viewBox="0 0 13 13">
            <rect width="13" height="13" fill="#303030" />
            <path d="M6.500 2v9M4.500 4l2-2 2 2M1.500 6v3h10V6M0 7l2-2 2 2M9 7l2-2 2 2M4 5h5" fill="none" stroke="#777" />
          </svg>
          <svg width="10" height="10" viewBox="0 0 10 10">
            <circle cx="5" cy="5" r="4.500" fill="#5e5e5e" />
            <circle cx="4" cy="3" r="2" fill="#8a8a8a" />
          </svg>
          <svg width="12" height="12" viewBox="0 0 12 12" fill="none" stroke="#6c6c6c" strokeWidth="1.500">
            <path d="M1 2h9M2 1v9M2 3l8 8M9 1v8M3 10l7-7" />
          </svg>
        </AxisGroup>
        <Fill />
        <DimLabel htmlFor={workspaceId}>Workspace:</DimLabel>
        <Row $gap="7px" $pad="0 0 0 6px">
          <Select id={workspaceId} width="138px" value="Standard" />
          <Search width="192px" placeholder="Search Help" label="Search Help" />
        </Row>
      </Toolbar>
      <Workspace>
        <MainArea>
          <TopRow>
            <ProjectPanel />
            <CompositionPanel />
          </TopRow>
          <TimelinePanel />
        </MainArea>
        <SideArea>
          <InfoPanel />
          <HStrip $width="177px" />
          <TrackerPanel />
          <HStrip $width="138px" />
          <EffectsPanel />
        </SideArea>
      </Workspace>
    </WindowFrame>
  );
}

/* ---------- composition settings dialog ---------- */

const Dialog = styled.div`
  position: absolute;
  left: 594px;
  top: 416px;
  width: 511px;
  height: 480px;
  border: 2px solid #35495b;
  border-top: 1px solid #0c0c0c;
  box-shadow: 0 0 6px 1px rgba(0, 0, 0, 0.75);
  background: #3e3e3e;
`;

const DialogEdge = styled.span`
  position: absolute;
  top: 0;
  ${(p) => p.$side}: -2px;
  width: 2px;
  height: 134px;
  background: #b9c4cc;
`;

const DialogTitle = styled.header`
  display: flex;
  align-items: center;
  justify-content: space-between;
  height: 23px;
  padding-left: 1px;
  border-bottom: 1px solid #a9b6c0;
  color: #000;
  background: radial-gradient(ellipse 140px 30px at 50px 14px, rgba(168, 178, 186, 0.9) 50%, transparent),
    linear-gradient(90deg, #7b8b97 0, #5c7185 150px, #30485c 230px, #223849 290px, #475e72 340px, #6a7f90 400px, #8894a0 100%);
  h2 {
    margin: 0;
    font-size: 12px;
    font-weight: 400;
  }
`;

const DialogClose = styled.button`
  display: flex;
  align-items: center;
  justify-content: center;
  align-self: flex-start;
  width: 48px;
  height: 18px;
  border: 1px solid #e3b7ae;
  border-top: 0;
  border-radius: 0 0 5px 5px;
  background: linear-gradient(#dd9a8c 0, #cc6450 8px, #b02612 9px, #c94330 100%);
`;

const NameRow = styled.div`
  display: flex;
  align-items: center;
  justify-content: flex-end;
  gap: 7px;
  margin: 16px 66px 11px 0;
  input {
    width: 268px;
    height: 18px;
    padding: 0 4px 2px;
    border: 1px solid #000;
    color: #1c1c1c;
    background: #9c9c9c;
  }
`;

const DialogTabs = styled.div`
  display: flex;
  align-items: flex-end;
  margin-left: 17px;
`;

const DialogTab = styled.button`
  position: relative;
  height: ${(p) => (p.$active ? '20px' : '19px')};
  width: ${(p) => (p.$active ? '77px' : '54px')};
  margin-bottom: -1px;
  padding-right: 5px;
  border: 1px solid #4f4f4f;
  border-bottom: 0;
  color: ${(p) => (p.$active ? '#bcbcbc' : '#777')};
  background: ${(p) => (p.$active ? 'linear-gradient(#4a4a4a, #3e3e3e)' : 'linear-gradient(#383838, #2e2e2e)')};
`;

const TabSheet = styled.div`
  height: 336px;
  margin: 0 16px;
  border: 1px solid #4b4b4b;
`;

const AnchorRow = styled.div`
  display: flex;
  align-items: center;
  margin: 11px 0 13px;
  color: #565656;
`;

const FieldLabel = styled.label`
  width: ${(p) => p.$width || '124px'};
  margin-right: ${(p) => p.$gap || '7px'};
  text-align: right;
  white-space: nowrap;
`;

const AnchorGrid = styled.div`
  display: grid;
  grid-template-columns: repeat(3, 20px);
  gap: 3px;
`;

const AnchorCell = styled.button`
  width: 20px;
  height: 20px;
  border: 1px solid #303030;
  svg {
    transform: rotate(${(p) => p.$angle}deg);
  }
`;

const FormRow = styled.div`
  display: flex;
  align-items: center;
`;

const Preserve = styled.div`
  display: flex;
  flex-direction: column;
  align-items: flex-start;
  gap: 5px;
  margin: 12px 0 0 41px;
`;

const MotionBlur = styled.fieldset`
  height: 153px;
  margin: 14px 11px 0;
  padding: 10px 12px 0 13px;
  border: 1px solid #222;
  legend {
    margin-left: -8px;
    padding: 0 14px 0 2px;
    line-height: 14px;
  }
`;

const ValueButton = styled.button`
  margin-right: 3px;
  color: #ad8513;
  line-height: 12px;
  border-bottom: 1px dotted #ad8513;
`;

const Rule = styled.hr`
  margin: 13px 0 14px;
  border: 0;
  border-top: 1px solid #1f1f1f;
`;

const Help = styled.p`
  margin: 13px 0 0 1px;
  font-family: Roboto, 'Open Sans', sans-serif;
  font-size: 9px;
  line-height: 11px;
  white-space: nowrap;
`;

const Popup = styled.ul`
  position: absolute;
  left: 147px;
  top: 199px;
  width: 163px;
  margin: 0;
  padding: 2px;
  list-style: none;
  color: #000;
  border: 1px solid #a0a0a0;
  background: linear-gradient(90deg, #f1f1f1 28px, #dedede 28px, #dedede 29px, #fff 29px, #f1f1f1 30px);
  box-shadow: 2px 2px 3px rgba(0, 0, 0, 0.6);
`;

const PopupItem = styled.li`
  height: 22px;
  button {
    display: flex;
    align-items: center;
    gap: 10px;
    width: 100%;
    height: 22px;
  }
`;

const Radio = styled.span`
  display: flex;
  align-items: center;
  justify-content: center;
  width: 22px;
  height: 22px;
  border: 1px solid ${(p) => (p.$on ? '#aecff7' : 'transparent')};
  border-radius: 3px;
`;

const Annotation = styled.svg`
  position: absolute;
  left: 134px;
  top: 124px;
  pointer-events: none;
`;

const anchorAngles = [-45, 0, 45, -90, null, 90, -135, 180, 135];

function CompositionSettings() {
  const nameId = useId();
  const rendererId = useId();
  return (
    <Dialog role="dialog" aria-label="Composition Settings">
      <DialogTitle>
        <h2>Composition Settings</h2>
        <DialogClose aria-label="Close">
          <svg width="11" height="10" viewBox="0 0 12 11">
            <path d="M.500.500h4L6 3 7.500.500h4L8 5.500l3.500 5h-4L6 8l-1.500 2.500h-4L4 5.500z" fill="#fff" stroke="#5a3a38" />
          </svg>
        </DialogClose>
      </DialogTitle>
      <NameRow>
        <label htmlFor={nameId}>Composition Name:</label>
        <input id={nameId} defaultValue="Comp 1" />
      </NameRow>
      <DialogTabs>
        <DialogTab>Basic</DialogTab>
        <DialogTab $active>Advanced</DialogTab>
      </DialogTabs>
      <TabSheet>
        <AnchorRow>
          <FieldLabel as="span">Anchor:</FieldLabel>
          <AnchorGrid>
            {anchorAngles.map((angle, i) => (
              <AnchorCell key={i} $angle={angle || 0} aria-label="Anchor point">
                {angle !== null && (
                  <svg width="18" height="18" viewBox="0 0 18 18" fill="#666">
                    <path d="M9 0l3 10H9.500v8h-1v-8H6z" />
                  </svg>
                )}
              </AnchorCell>
            ))}
          </AnchorGrid>
        </AnchorRow>
        <FormRow>
          <FieldLabel htmlFor={rendererId} $gap="6px">
            Renderer:
          </FieldLabel>
          <Select id={rendererId} width="130px" value="Classic 3D" focus />
          <Row $gap="12px" $pad="0 0 0 11px">
            <PushButton $bright $width="78px">
              Options...
            </PushButton>
            <PushButton $bright $width="78px">
              About...
            </PushButton>
          </Row>
        </FormRow>
        <Preserve>
          <CheckLabel $bright>
            <input type="checkbox" />
            Preserve frame rate when nested or in render queue
          </CheckLabel>
          <CheckLabel $bright>
            <input type="checkbox" />
            Preserve resolution when nested
          </CheckLabel>
        </Preserve>
        <MotionBlur>
          <legend>Motion Blur</legend>
          <FormRow>
            <FieldLabel as="span" $width="100px">
              Shutter Angle:
            </FieldLabel>
            <ValueButton>180</ValueButton>º
            <FieldLabel as="span" $width="149px">
              Shutter Phase:
            </FieldLabel>
            <ValueButton>-90</ValueButton>º
          </FormRow>
          <Rule />
          <FormRow>
            <FieldLabel as="span" $width="100px">
              Samples Per Frame:
            </FieldLabel>
            <ValueButton>16</ValueButton>
            <FieldLabel as="span" $width="160px">
              Adaptive Sample Limit:
            </FieldLabel>
            <ValueButton>159</ValueButton>
          </FormRow>
          <Help>
            Samples Per Frame controls the number of motion blur samples for Classic 3D layers, shape layers,
            <br />
            and certain effects. 2D layer motion automatically uses more samples per frame when needed, up to
            <br />
            the value specified by Adaptive Sample Limit. Ray-traced 3D layers use Ray-tracing Quality to control
            <br />
            the appearance of motion blur.
          </Help>
        </MotionBlur>
      </TabSheet>
      <DialogEdge $side="left" />
      <DialogEdge $side="right" />
      <Popup>
        <PopupItem>
          <button>
            <Radio $on>
              <svg width="8" height="8" viewBox="0 0 8 8">
                <circle cx="4" cy="4" r="4" fill="#35358c" />
                <circle cx="3" cy="3" r="1.500" fill="#a9a9e0" />
              </svg>
            </Radio>
            Classic 3D
          </button>
        </PopupItem>
        <PopupItem>
          <button>
            <Radio />
            Ray-traced 3D
          </button>
        </PopupItem>
      </Popup>
      <Annotation width="240" height="140" viewBox="730 773 240 140" fill="none" stroke="#ed1c24" strokeLinecap="round" strokeLinejoin="round">
        <path d="M944 783c-3 3-3 8-3 12s-2 8-4 13l-6 10c-3 5-5 6-9 9l-10 11c-2 3-3 7-4 12" strokeWidth="4" />
        <path d="M906 835l3 17M914 834l-3 14-3 9 10-4" strokeWidth="4" />
        <path d="M742 882c6-5 13-8 22-11 14 0 30 1 44-1 18 1 33 0 47 1 10 2 18 4 25 5l32-1c2 4 2 8 0 13-6 1-14 4-22 8-8 3-16 5-26 7h-44c-18 0-30-2-42-5-12-3-22-6-30-9-5-2-7-4-6-7z" strokeWidth="5" />
      </Annotation>
    </Dialog>
  );
}

export default function App() {
  return (
    <Desktop>
      <GlobalStyle />
      <Shot $cropped>
        <AppWindow />
      </Shot>
      <Shot>
        <AppWindow deep />
        <CompositionSettings />
      </Shot>
    </Desktop>
  );
}
